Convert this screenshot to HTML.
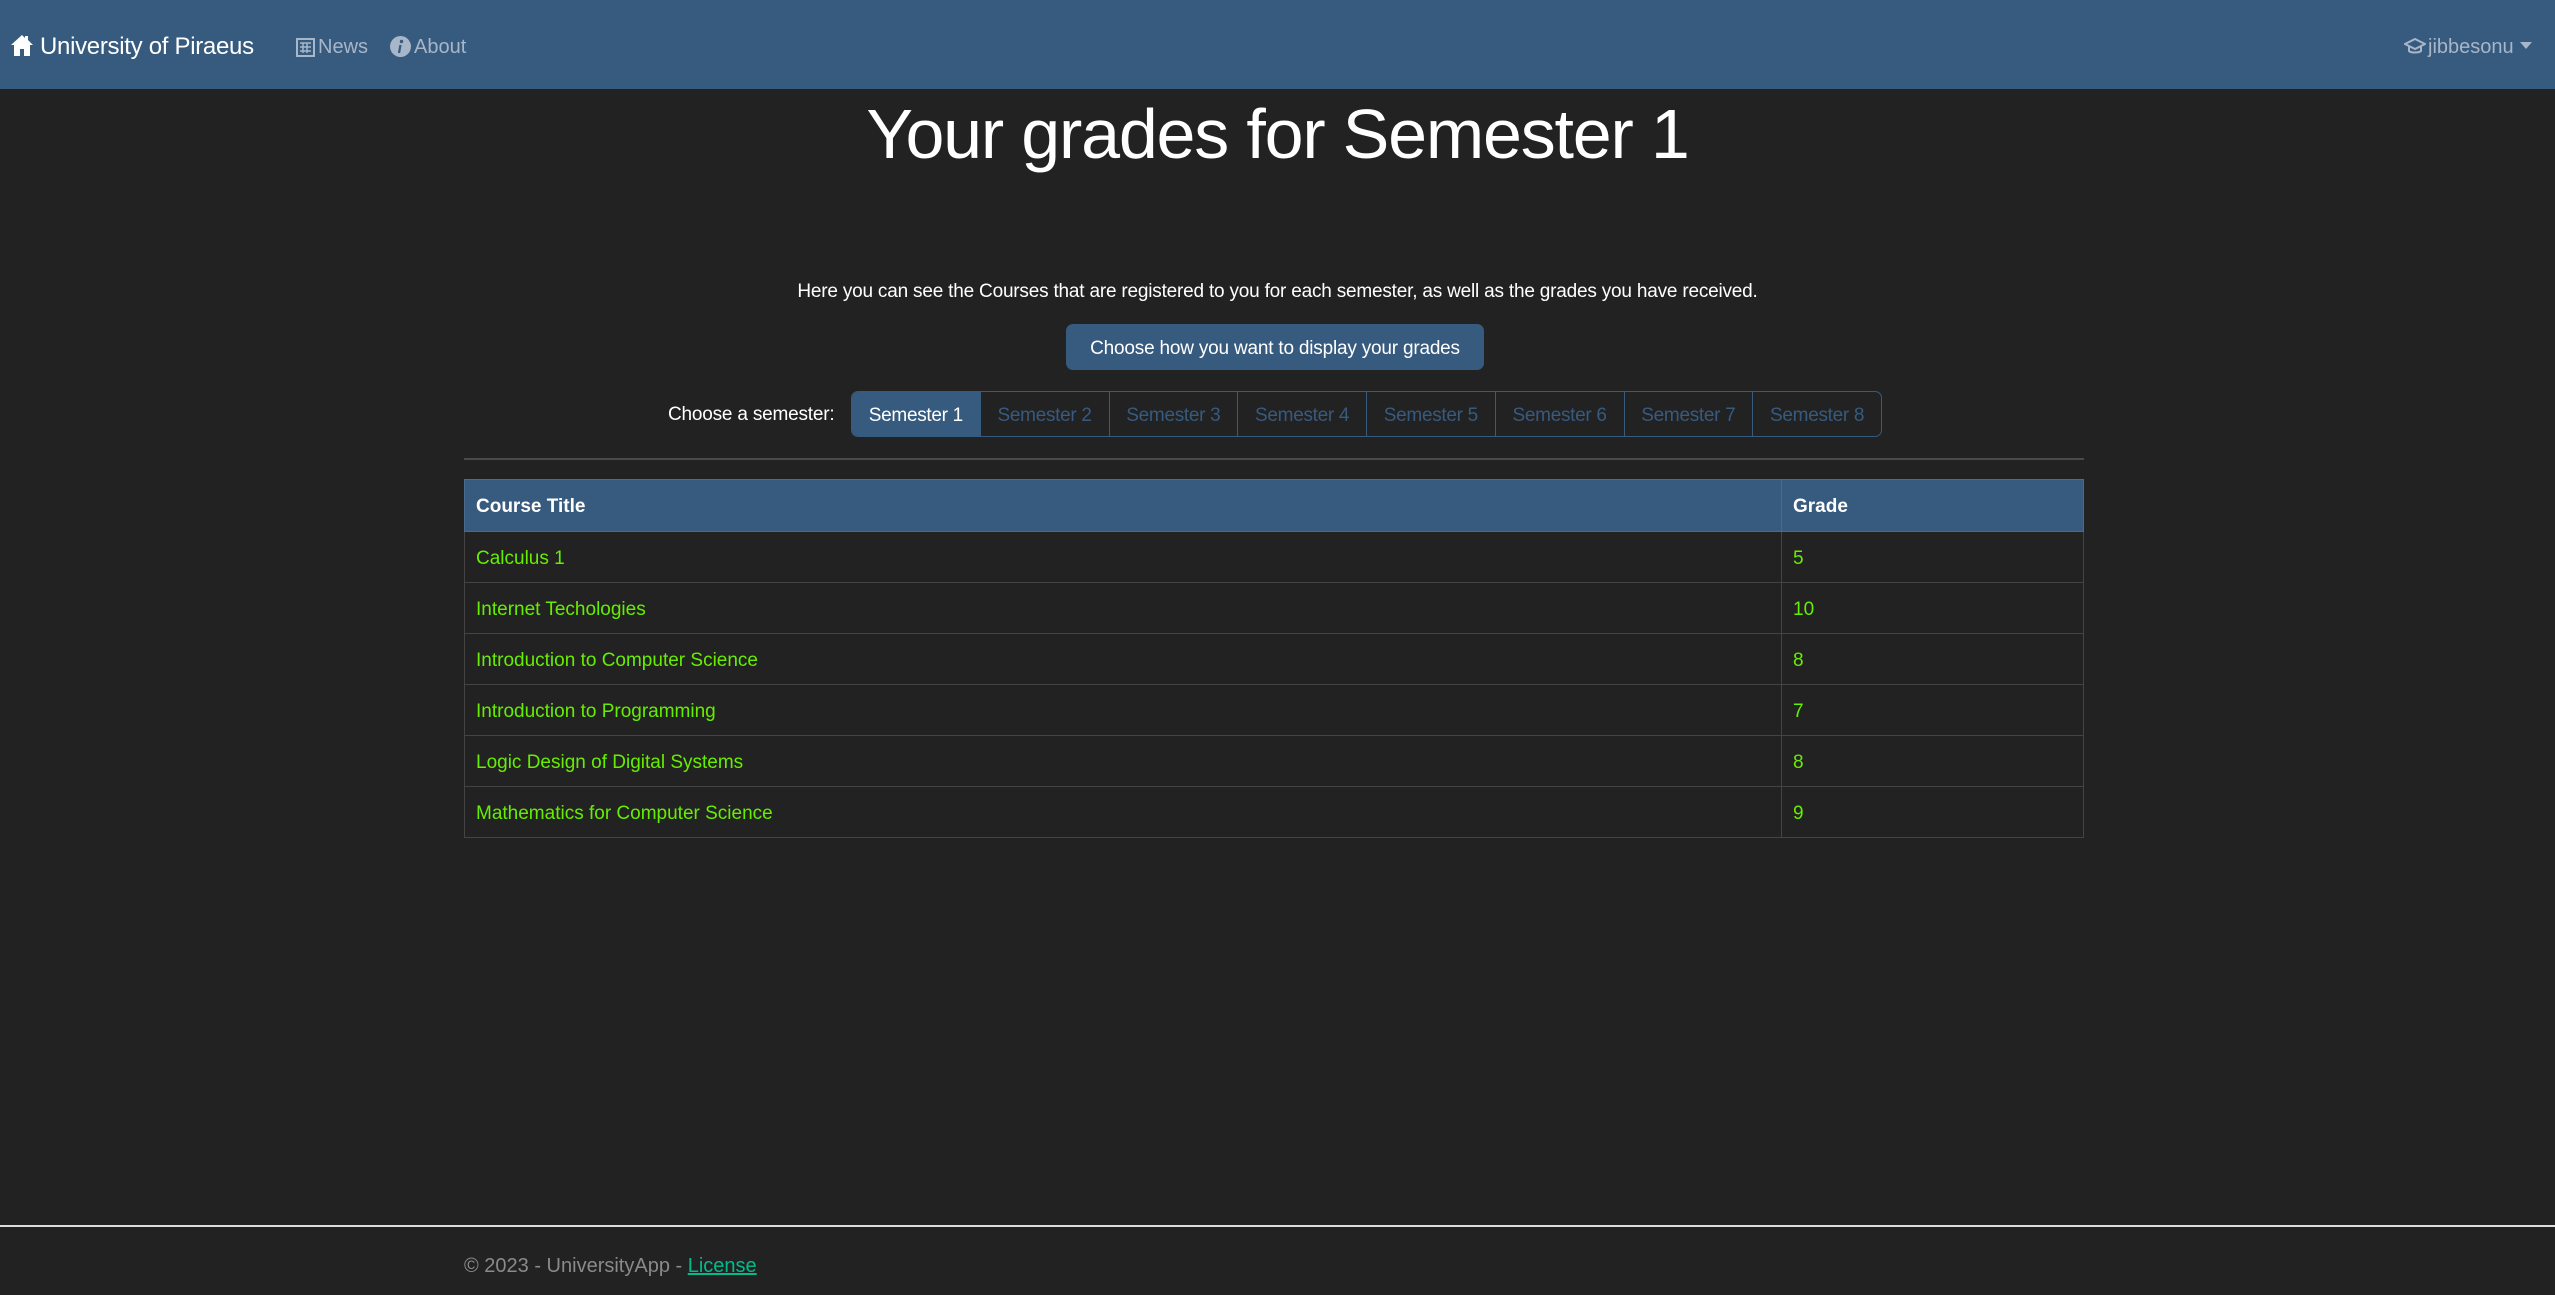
<!DOCTYPE html>
<html><head><meta charset="utf-8"><style>
*{box-sizing:border-box;margin:0;padding:0}
body{width:2555px;height:1295px;background:#222;font-family:"Liberation Sans",sans-serif;color:#fff;position:relative;overflow:hidden}
.nav{position:absolute;left:0;top:0;width:2555px;height:89px;background:#375a7f}
.abs{position:absolute;white-space:nowrap}
.brand{left:40px;top:33px;font-size:24px;color:#fff;letter-spacing:-0.3px}
.nl{font-size:20px;color:#a7b6c8;top:36px}
h1{position:absolute;left:0;width:2555px;text-align:center;top:94px;font-size:70px;font-weight:normal;letter-spacing:-1.2px}
.p{left:0;width:2555px;text-align:center;top:281px;font-size:19px;letter-spacing:-0.2px}
.btn{left:1066px;top:324px;width:418px;height:46px;background:#375a7f;border-radius:7px;font-size:19px;text-align:center;line-height:50px;letter-spacing:-0.2px}
.lbl{left:668px;top:404px;font-size:19px;letter-spacing:-0.2px}
.grp{left:851px;top:391px;width:1031px;height:46px;border:1px solid #375a7f;border-radius:7px;display:flex;overflow:hidden}
.grp div{flex:1;border-left:1px solid #375a7f;color:#375a7f;font-size:19px;text-align:center;line-height:48px;letter-spacing:-0.3px}
.grp div:first-child{border-left:none;background:#375a7f;color:#fff}
.hr{left:464px;top:458px;width:1620px;height:2px;background:#4a4a4a}
table{position:absolute;left:464px;top:479px;width:1620px;border-collapse:collapse;font-size:19px}
th{background:#375a7f;text-align:left;height:52px;padding:3px 11px 0;font-weight:bold;border:1px solid #4a6a8f}
td{height:51px;padding:3px 11px 0;color:#66ee00;border:1px solid #444}
.fl{left:0;top:1225px;width:2555px;height:2px;background:#ddd}
.ft{left:464px;top:1255px;font-size:20px;color:#8a8a8a}
.ft a{color:#00bc8c;text-decoration:underline}
</style></head><body>
<div class="nav">
<svg class="abs" style="left:10px;top:34px" width="24" height="23" viewBox="0 0 24 23"><path d="M12 1L1 11h3v11h6v-7h4v7h6V11h3L18 6V2h-3v2z" fill="#fff"/></svg>
<div class="abs brand">University of Piraeus</div>
<svg class="abs" style="left:296px;top:38px" width="19" height="19" viewBox="0 0 19 19"><rect x="1" y="1" width="17" height="17" fill="none" stroke="#a7b6c8" stroke-width="2"/><path d="M4 5h11M4 9h11M4 13h11M7 5v10M11 5v10" stroke="#a7b6c8" stroke-width="1.5"/></svg>
<div class="abs nl" style="left:318px">News</div>
<svg class="abs" style="left:390px;top:36px" width="21" height="21" viewBox="0 0 21 21"><circle cx="10.5" cy="10.5" r="10.5" fill="#a7b6c8"/><circle cx="11.5" cy="5.5" r="1.7" fill="#375a7f"/><path d="M10.5 9l-1.5 8" stroke="#375a7f" stroke-width="2.2"/></svg>
<div class="abs nl" style="left:414px">About</div>
<svg class="abs" style="left:2404px;top:37px" width="22" height="20" viewBox="0 0 22 20"><path d="M11 2L1 7l10 5 10-5z" fill="none" stroke="#a7b6c8" stroke-width="2"/><path d="M5 9v5c2 2 10 2 12 0V9" fill="none" stroke="#a7b6c8" stroke-width="2"/></svg>
<div class="abs nl" style="left:2428px">jibbesonu</div>
<svg class="abs" style="left:2520px;top:42px" width="12" height="7"><path d="M0 0h12L6 7z" fill="#a7b6c8"/></svg>
</div>
<h1>Your grades for Semester 1</h1>
<div class="abs p">Here you can see the Courses that are registered to you for each semester, as well as the grades you have received.</div>
<div class="abs btn">Choose how you want to display your grades</div>
<div class="abs lbl">Choose a semester:</div>
<div class="abs grp"><div>Semester 1</div><div>Semester 2</div><div>Semester 3</div><div>Semester 4</div><div>Semester 5</div><div>Semester 6</div><div>Semester 7</div><div>Semester 8</div></div>
<div class="abs hr"></div>
<table>
<tr><th style="width:1317px">Course Title</th><th>Grade</th></tr>
<tr><td>Calculus 1</td><td>5</td></tr>
<tr><td>Internet Techologies</td><td>10</td></tr>
<tr><td>Introduction to Computer Science</td><td>8</td></tr>
<tr><td>Introduction to Programming</td><td>7</td></tr>
<tr><td>Logic Design of Digital Systems</td><td>8</td></tr>
<tr><td>Mathematics for Computer Science</td><td>9</td></tr>
</table>
<div class="abs fl"></div>
<div class="abs ft">© 2023 - UniversityApp - <a>License</a></div>
</body></html>
